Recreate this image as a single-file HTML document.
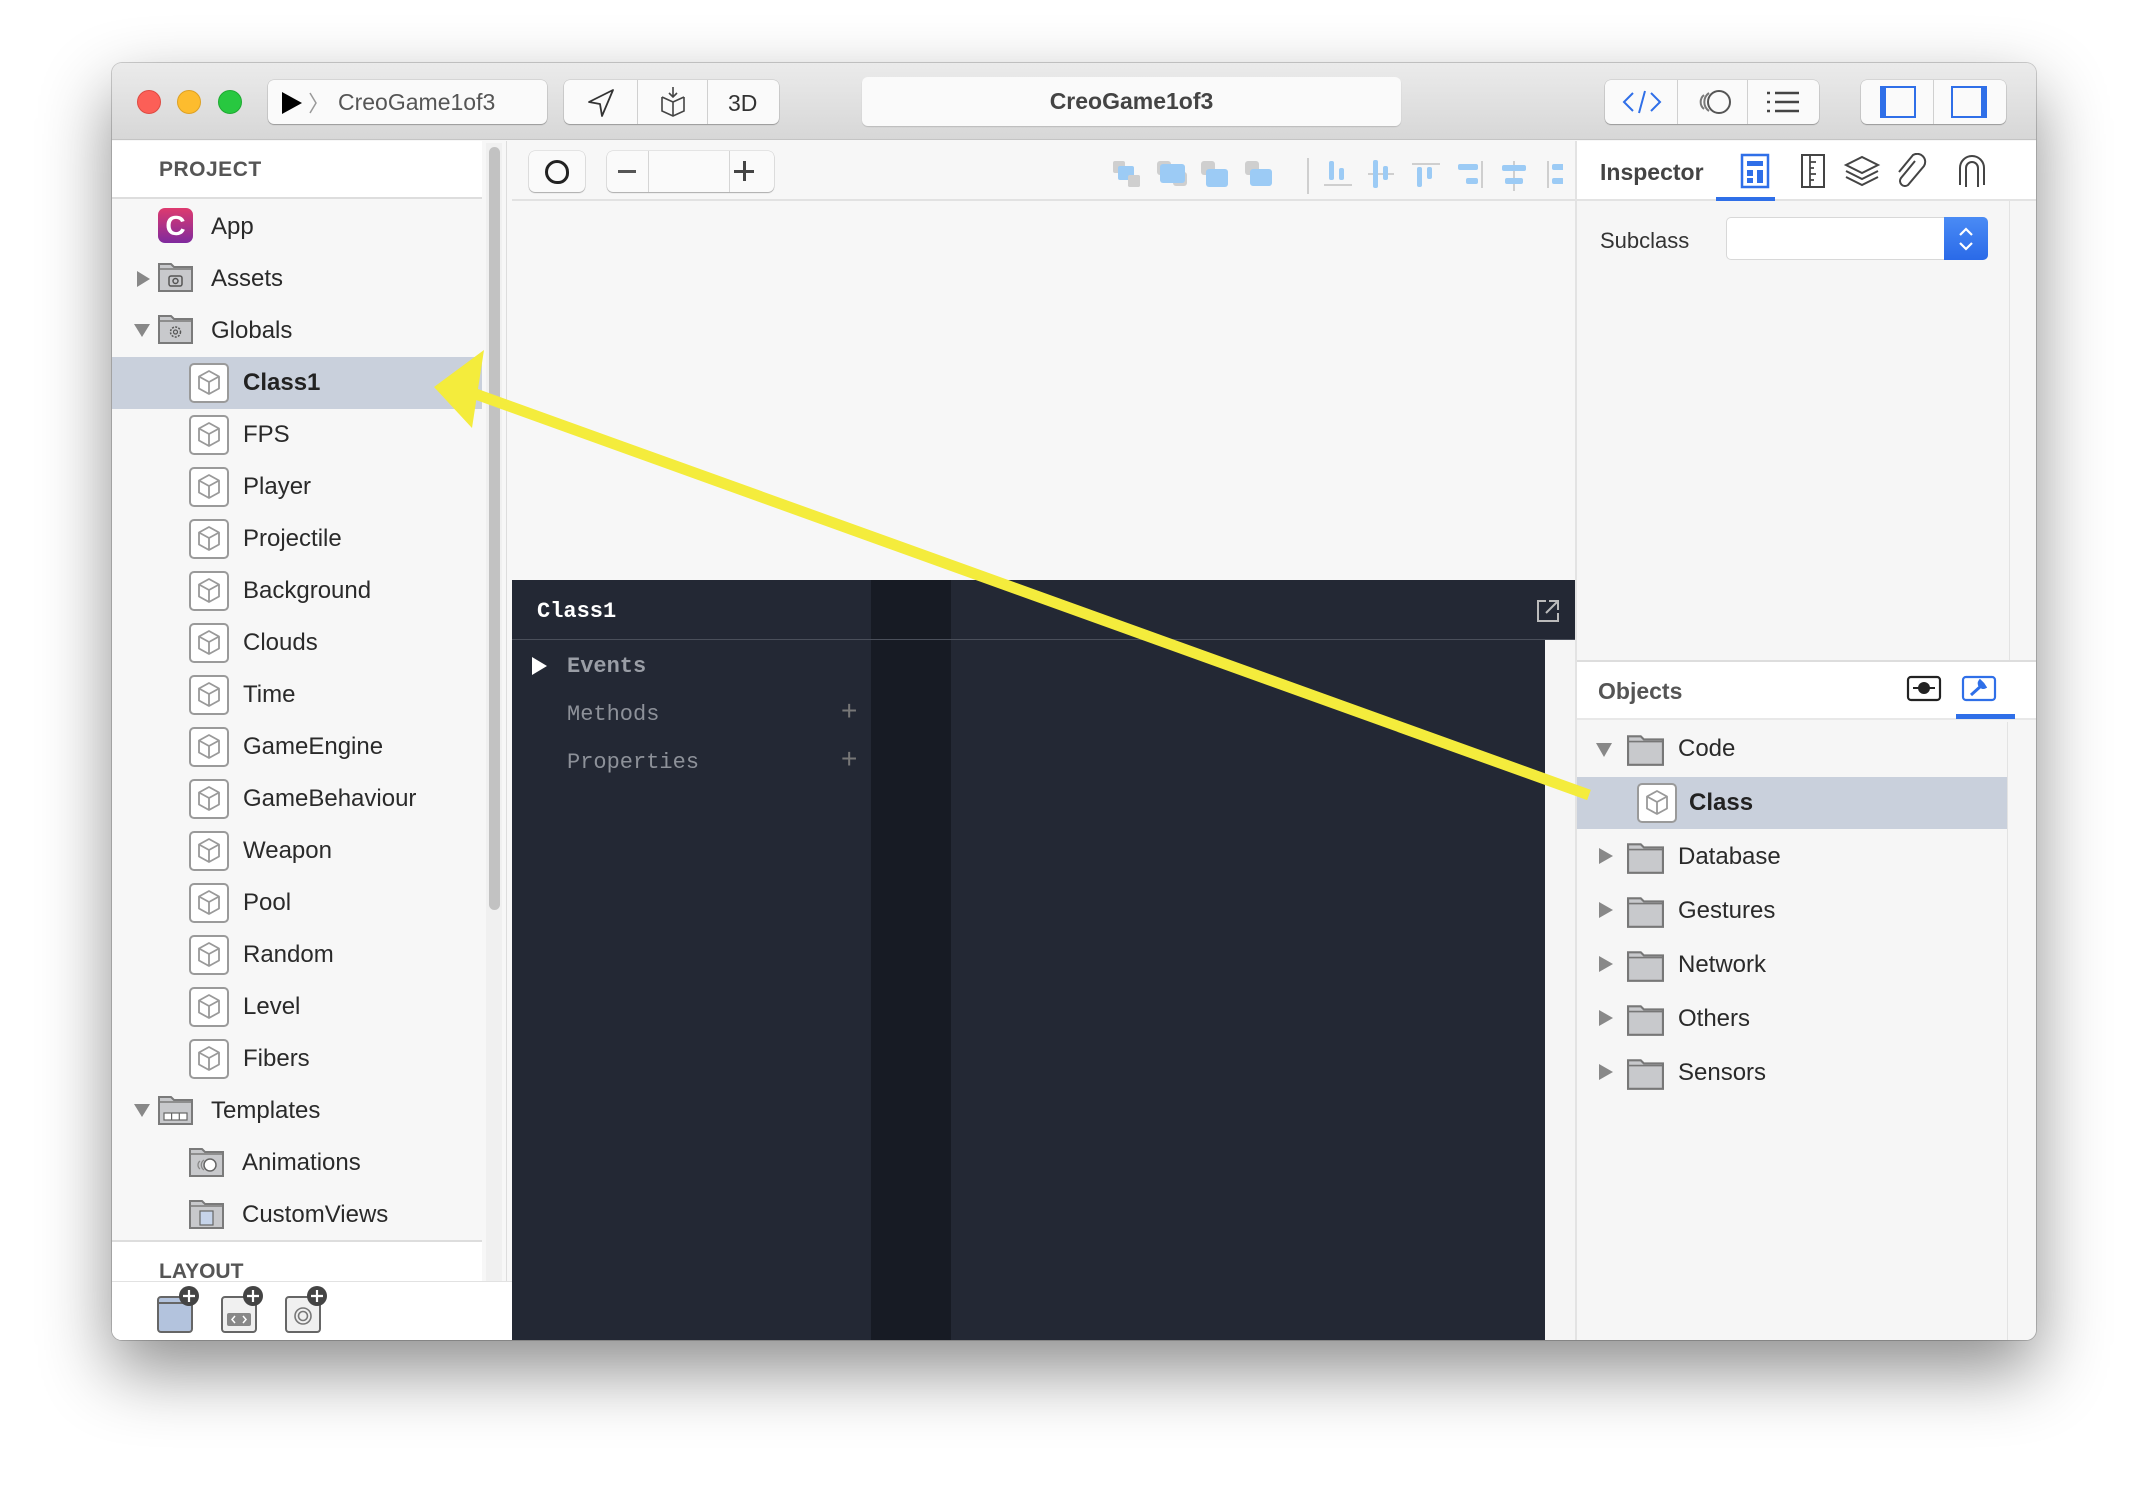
<!DOCTYPE html>
<html><head><meta charset="utf-8"><style>
*{margin:0;padding:0;box-sizing:border-box}
body{width:2148px;height:1500px;background:#fff;position:relative;overflow:hidden;font-family:"Liberation Sans",sans-serif;color:#2a2a2a}
.a{position:absolute}
.win{left:112px;top:63px;width:1924px;height:1277px;border-radius:10px;background:#f7f7f7;box-shadow:0 30px 70px rgba(0,0,0,.45),0 0 0 1px rgba(0,0,0,.18);overflow:hidden}
.tb{left:0;top:0;width:1924px;height:77px;background:linear-gradient(#ebebeb,#d7d7d7);border-bottom:1px solid #c4c4c4}
.dot{width:24px;height:24px;border-radius:50%;top:27px}
.btn{background:#fafafa;border-radius:6px;box-shadow:0 1px 1px rgba(0,0,0,.25),0 0 0 .5px rgba(0,0,0,.15)}
.row{position:absolute;height:52px;font-size:24px;line-height:52px;white-space:nowrap}
.tri{position:absolute;width:0;height:0}
.cube{position:absolute;width:40px;height:40px;border:2px solid #9a9a9a;border-radius:5px;background:#fff}
.fold{position:absolute;width:35px;height:31px}
.mono{font-family:"Liberation Mono","DejaVu Sans Mono",monospace}
</style></head><body>
<div class="a win">
 <div class="a tb">
  <div class="a dot" style="left:25px;background:#fc5f57;border:1px solid #de4a42"></div>
  <div class="a dot" style="left:65px;background:#fdbc2e;border:1px solid #dea123"></div>
  <div class="a dot" style="left:106px;background:#28c840;border:1px solid #1faa32"></div>
  <div class="a btn" style="left:156px;top:17px;width:279px;height:44px"></div>
  <svg class="a" style="left:168px;top:28px" width="40" height="24"><path d="M2 1 L22 12 L2 23Z" fill="#000"/><path d="M30 2 L36 12 L30 22" stroke="#999" stroke-width="1.5" fill="none"/></svg>
  <div class="a" style="left:226px;top:17px;line-height:44px;font-size:23px;color:#555">CreoGame1of3</div>
  <div class="a btn" style="left:452px;top:17px;width:215px;height:44px"></div>
  <div class="a" style="left:525px;top:17px;width:1px;height:44px;background:#d0d0d0"></div>
  <div class="a" style="left:595px;top:17px;width:1px;height:44px;background:#d0d0d0"></div>
  <svg class="a" style="left:474px;top:24px" width="30" height="32"><path d="M27 3 L3 15 L14 17 L16 29 Z" fill="none" stroke="#333" stroke-width="1.8" stroke-linejoin="round"/></svg>
  <svg class="a" style="left:546px;top:22px" width="30" height="34"><path d="M15 2 V12 M11 8 L15 12 L19 8" stroke="#444" stroke-width="1.6" fill="none"/><path d="M4 12 L15 17 L26 12 M4 12 V26 L15 31 L26 26 V12 M15 17 V31" stroke="#444" stroke-width="1.6" fill="none"/></svg>
  <div class="a" style="left:616px;top:17px;line-height:46px;font-size:23px;color:#333">3D</div>
  <div class="a btn" style="left:750px;top:14px;width:539px;height:49px;box-shadow:0 1px 1px rgba(0,0,0,.15)"></div>
  <div class="a" style="left:750px;top:14px;width:539px;line-height:49px;text-align:center;font-size:23px;font-weight:bold;color:#444">CreoGame1of3</div>
  <div class="a btn" style="left:1493px;top:17px;width:214px;height:44px"></div>
  <div class="a" style="left:1565px;top:17px;width:1px;height:44px;background:#d0d0d0"></div>
  <div class="a" style="left:1635px;top:17px;width:1px;height:44px;background:#d0d0d0"></div>
  <svg class="a" style="left:1510px;top:26px" width="40" height="26"><path d="M11 4 L2 13 L11 22 M29 4 L38 13 L29 22 M23 2 L17 24" stroke="#2f6fe8" stroke-width="2" fill="none"/></svg>
  <svg class="a" style="left:1583px;top:25px" width="40" height="28"><circle cx="24" cy="14" r="11" fill="#fafafa" stroke="#555" stroke-width="2"/><path d="M14 5 A11 11 0 0 0 14 23 M9 7 A9 9 0 0 0 9 21" stroke="#777" stroke-width="2" fill="none"/></svg>
  <svg class="a" style="left:1652px;top:27px" width="40" height="24"><g stroke="#444" stroke-width="2.5"><path d="M3 3h3M11 3h24M3 12h3M11 12h24M3 21h3M11 21h24"/></g></svg>
  <div class="a btn" style="left:1749px;top:17px;width:145px;height:44px"></div>
  <div class="a" style="left:1821px;top:17px;width:1px;height:44px;background:#d0d0d0"></div>
  <div class="a" style="left:1768px;top:23px;width:36px;height:32px;border:2.5px solid #2f6fe8;border-left-width:6px"></div>
  <div class="a" style="left:1839px;top:23px;width:36px;height:32px;border:2.5px solid #2f6fe8;border-right-width:6px"></div>
 </div>

 <!-- left sidebar -->
 <div class="a" style="left:0;top:78px;width:370px;height:1199px;background:#f7f7f7"></div>
 <div class="a" style="left:0;top:78px;width:370px;height:58px;background:#fff;border-bottom:2px solid #ddd"></div>
 <div class="a" style="left:47px;top:78px;line-height:58px;font-size:21px;font-weight:bold;color:#555;letter-spacing:.5px">PROJECT</div>
 <div class="a" style="left:374px;top:80px;width:16px;height:1199px;background:#f0f0f0"></div>
 <div class="a" style="left:377px;top:84px;width:11px;height:763px;border-radius:6px;background:#c2c2c2"></div>
 <div class="a" style="left:394px;top:78px;width:1px;height:1199px;background:#ddd"></div>

 <div class="a" style="left:46px;top:145px;width:35px;height:35px;border-radius:7px;background:linear-gradient(#de3a6e,#7f2a9e)"></div>
 <div class="a" style="left:46px;top:145px;width:35px;line-height:35px;text-align:center;color:#fff;font-weight:bold;font-size:28px">C</div>
 <div class="row" style="left:99px;top:138px">App</div>

 <div class="tri" style="left:25px;top:208px;border-left:13px solid #888;border-top:8px solid transparent;border-bottom:8px solid transparent"></div>
 <svg class="fold" style="left:46px;top:198px" viewBox="0 0 35 31"><path d="M1 3h12l3 3h18v24H1z" fill="#c8c9cc" stroke="#7a7a7a" stroke-width="2"/><path d="M1 8h33" stroke="#7a7a7a" stroke-width="1.5"/><rect x="11" y="15" width="13" height="10" rx="2" fill="none" stroke="#555" stroke-width="1.5"/><circle cx="17.5" cy="20" r="2.5" fill="none" stroke="#555" stroke-width="1.5"/></svg>
 <div class="row" style="left:99px;top:190px">Assets</div>

 <div class="tri" style="left:22px;top:261px;border-top:13px solid #888;border-left:8px solid transparent;border-right:8px solid transparent"></div>
 <svg class="fold" style="left:46px;top:250px" viewBox="0 0 35 31"><path d="M1 3h12l3 3h18v24H1z" fill="#c8c9cc" stroke="#7a7a7a" stroke-width="2"/><path d="M1 8h33" stroke="#7a7a7a" stroke-width="1.5"/><circle cx="17.5" cy="19" r="5" fill="none" stroke="#555" stroke-width="1.5" stroke-dasharray="2 1.3"/><circle cx="17.5" cy="19" r="2" fill="none" stroke="#555" stroke-width="1.2"/></svg>
 <div class="row" style="left:99px;top:242px">Globals</div>

 <div class="a" style="left:0;top:294px;width:370px;height:52px;background:#c9d0dc"></div>
 <div id="classes"></div>

 <div class="tri" style="left:22px;top:1041px;border-top:13px solid #888;border-left:8px solid transparent;border-right:8px solid transparent"></div>
 <svg class="fold" style="left:46px;top:1031px" viewBox="0 0 35 31"><path d="M1 3h12l3 3h18v24H1z" fill="#c8c9cc" stroke="#7a7a7a" stroke-width="2"/><path d="M1 8h33" stroke="#7a7a7a" stroke-width="1.5"/><rect x="6" y="19" width="23" height="7" fill="#fff" stroke="#666" stroke-width="1.2"/><path d="M13.6 19v7M21.3 19v7" stroke="#666" stroke-width="1.2"/></svg>
 <div class="row" style="left:99px;top:1022px">Templates</div>
 <svg class="fold" style="left:77px;top:1083px" viewBox="0 0 35 31"><path d="M1 3h12l3 3h18v24H1z" fill="#c8c9cc" stroke="#7a7a7a" stroke-width="2"/><path d="M1 8h33" stroke="#7a7a7a" stroke-width="1.5"/><circle cx="21" cy="19" r="6" fill="#fff" stroke="#666" stroke-width="1.5"/><path d="M15 14a6 6 0 0 0 0 10M11 15a5 5 0 0 0 0 8" stroke="#888" stroke-width="1.3" fill="none"/></svg>
 <div class="row" style="left:130px;top:1074px">Animations</div>
 <svg class="fold" style="left:77px;top:1135px" viewBox="0 0 35 31"><path d="M1 3h12l3 3h18v24H1z" fill="#c8c9cc" stroke="#7a7a7a" stroke-width="2"/><path d="M1 8h33" stroke="#7a7a7a" stroke-width="1.5"/><rect x="11" y="13" width="13" height="14" fill="#c6d4ea" stroke="#666" stroke-width="1.2"/></svg>
 <div class="row" style="left:130px;top:1126px">CustomViews</div>

 <div class="a" style="left:0;top:1177px;width:370px;height:101px;background:#fff;border-top:2px solid #ddd"></div>
 <div class="a" style="left:47px;top:1197px;font-size:21px;font-weight:bold;color:#555">LAYOUT</div>
 <div class="a" style="left:0;top:1218px;width:400px;height:59px;background:#fff;border-top:1px solid #e2e2e2"></div>
 <svg class="a" style="left:44px;top:1222px" width="260" height="50">
  <rect x="2" y="12" width="34" height="35" rx="3" fill="#b3c3dd" stroke="#666" stroke-width="2"/><path d="M2 18h34" stroke="#666" stroke-width="2"/>
  <circle cx="33" cy="11" r="10" fill="#444"/><path d="M33 5v12M27 11h12" stroke="#fff" stroke-width="2.2"/>
  <rect x="66" y="12" width="34" height="35" rx="3" fill="#f0f0f0" stroke="#666" stroke-width="2"/><rect x="71" y="28" width="24" height="13" rx="2" fill="#888"/><path d="M79 31l-3 3.5 3 3.5M87 31l3 3.5-3 3.5" stroke="#fff" stroke-width="1.5" fill="none"/>
  <circle cx="97" cy="11" r="10" fill="#444"/><path d="M97 5v12M91 11h12" stroke="#fff" stroke-width="2.2"/>
  <rect x="130" y="12" width="34" height="35" rx="3" fill="#f0f0f0" stroke="#666" stroke-width="2"/><circle cx="147" cy="31" r="8" fill="none" stroke="#777" stroke-width="1.6"/><circle cx="147" cy="31" r="4.5" fill="none" stroke="#777" stroke-width="1.6"/>
  <circle cx="161" cy="11" r="10" fill="#444"/><path d="M161 5v12M155 11h12" stroke="#fff" stroke-width="2.2"/>
 </svg>

 <!-- canvas -->
 <div class="a" style="left:400px;top:78px;width:1063px;height:60px;background:#f7f7f7;border-bottom:2px solid #e2e2e2"></div>
 <div class="a btn" style="left:417px;top:88px;width:56px;height:41px"></div>
 <div class="a" style="left:433px;top:97px;width:24px;height:24px;border:3px solid #222;border-radius:50% 50% 45% 50%"></div>
 <div class="a btn" style="left:495px;top:88px;width:167px;height:41px"></div>
 <div class="a" style="left:536px;top:88px;width:1px;height:41px;background:#d5d5d5"></div>
 <div class="a" style="left:617px;top:88px;width:1px;height:41px;background:#d5d5d5"></div>
 <div class="a" style="left:506px;top:107px;width:18px;height:3px;background:#555"></div>
 <div class="a" style="left:631px;top:98px;width:3px;height:20px;background:#444"></div>
 <div class="a" style="left:622px;top:107px;width:20px;height:3px;background:#444"></div>
 <svg class="a" style="left:1001px;top:95px" width="450" height="40">
  <g fill="#cfcfcf"><rect x="0" y="3" width="12" height="12" rx="2"/><rect x="15" y="17" width="12" height="12" rx="2"/></g><rect x="5" y="8" width="16" height="14" rx="2" fill="#9ccbf5"/><rect x="15" y="17" width="12" height="12" rx="2" fill="#cfcfcf"/>
  <rect x="44" y="3" width="14" height="14" rx="3" fill="#cfcfcf"/><rect x="60" y="14" width="14" height="14" rx="3" fill="#cfcfcf"/><rect x="47" y="6" width="25" height="19" rx="3" fill="#9ccbf5"/>
  <rect x="88" y="3" width="14" height="14" rx="3" fill="#cfcfcf"/><rect x="93" y="11" width="22" height="18" rx="3" fill="#9ccbf5"/>
  <rect x="132" y="3" width="14" height="14" rx="3" fill="#cfcfcf"/><rect x="137" y="11" width="22" height="17" rx="3" fill="#9ccbf5"/>
  <rect x="194" y="-4" width="2" height="40" fill="#cfcfcf"/>
  <rect x="216" y="3" width="5" height="19" rx="2" fill="#9ccbf5"/><rect x="226" y="10" width="5" height="12" rx="2" fill="#9ccbf5"/><rect x="211" y="26" width="28" height="2" fill="#cfcfcf"/>
  <rect x="255" y="15" width="26" height="2" fill="#cfcfcf"/><rect x="260" y="2" width="5" height="28" rx="2" fill="#9ccbf5"/><rect x="270" y="8" width="5" height="14" rx="2" fill="#9ccbf5"/>
  <rect x="299" y="5" width="28" height="2" fill="#cfcfcf"/><rect x="304" y="9" width="5" height="20" rx="2" fill="#9ccbf5"/><rect x="314" y="9" width="5" height="12" rx="2" fill="#9ccbf5"/>
  <rect x="368" y="3" width="2" height="27" fill="#cfcfcf"/><rect x="345" y="6" width="20" height="6" rx="2" fill="#9ccbf5"/><rect x="353" y="20" width="12" height="6" rx="2" fill="#9ccbf5"/>
  <rect x="400" y="3" width="2" height="30" fill="#cfcfcf"/><rect x="389" y="7" width="24" height="6" rx="2" fill="#9ccbf5"/><rect x="392" y="20" width="18" height="6" rx="2" fill="#9ccbf5"/>
  <rect x="434" y="3" width="2" height="27" fill="#cfcfcf"/><rect x="439" y="6" width="20" height="6" rx="2" fill="#9ccbf5"/><rect x="439" y="20" width="12" height="6" rx="2" fill="#9ccbf5"/>
 </svg>

 <!-- dark code panel -->
 <div class="a" style="left:400px;top:517px;width:1063px;height:760px;background:#232834"></div>
 <div class="a" style="left:759px;top:517px;width:80px;height:760px;background:#171b24"></div>
 <div class="a" style="left:400px;top:576px;width:1063px;height:1px;background:#4a4f5a"></div>
 <div class="a" style="left:1433px;top:577px;width:30px;height:700px;background:#f5f5f5"></div>
 <div class="a mono" style="left:425px;top:536px;font-size:22px;font-weight:bold;color:#fff">Class1</div>
 <svg class="a" style="left:1423px;top:535px" width="26" height="26"><path d="M11 3H3v20h20v-8M14 3h9v9M23 3L11 15" stroke="#bbb" stroke-width="2" fill="none"/></svg>
 <div class="a" style="left:420px;top:594px;border-left:15px solid #fff;border-top:9px solid transparent;border-bottom:9px solid transparent"></div>
 <div class="a mono" style="left:455px;top:591px;font-size:22px;font-weight:bold;color:#9a9ea6">Events</div>
 <div class="a mono" style="left:455px;top:639px;font-size:22px;color:#8d9199">Methods</div>
 <div class="a mono" style="left:455px;top:687px;font-size:22px;color:#8d9199">Properties</div>
 <div class="a" style="left:729px;top:632px;font-size:28px;color:#777">+</div>
 <div class="a" style="left:729px;top:680px;font-size:28px;color:#777">+</div>

 <!-- right panel -->
 <div class="a" style="left:1463px;top:78px;width:461px;height:1199px;background:#f6f6f6;border-left:2px solid #e3e3e3"></div>
 <div class="a" style="left:1465px;top:78px;width:459px;height:60px;background:#fff;border-bottom:2px solid #e3e3e3"></div>
 <div class="a" style="left:1488px;top:78px;line-height:62px;font-size:23px;font-weight:bold;color:#444">Inspector</div>
 <svg class="a" style="left:1618px;top:90px" width="290" height="36">
  <rect x="12" y="2" width="26" height="32" fill="none" stroke="#2f6fe8" stroke-width="2.5"/><rect x="17" y="8" width="16" height="5" fill="#2f6fe8"/><rect x="17" y="17" width="6" height="6" fill="#2f6fe8"/><rect x="27" y="17" width="6" height="13" fill="#2f6fe8"/><rect x="17" y="25" width="6" height="5" fill="#2f6fe8"/>
  <rect x="72" y="2" width="22" height="32" fill="none" stroke="#444" stroke-width="2"/><path d="M80 2v32M80 9h6M80 15h4M80 21h6M80 27h4" stroke="#444" stroke-width="1.8"/>
  <path d="M116 12l16-8 16 8-16 8z" fill="none" stroke="#444" stroke-width="2"/><path d="M116 18l16 8 16-8M116 24l16 8 16-8" fill="none" stroke="#444" stroke-width="2"/>
  <path d="M185 8l-14 17a5 5 0 0 0 7 7l16-19a8 8 0 0 0-11-11l-14 17" fill="none" stroke="#444" stroke-width="2"/>
  <path d="M236 34V15a6 6 0 0 1 12 0v19M230 32V15a12 12 0 0 1 24 0v17" fill="none" stroke="#444" stroke-width="2"/>
 </svg>
 <div class="a" style="left:1604px;top:134px;width:59px;height:4px;background:#2f6fe8"></div>
 <div class="a" style="left:1488px;top:165px;font-size:22px;color:#333">Subclass</div>
 <div class="a" style="left:1614px;top:154px;width:262px;height:43px;background:#fff;border:1px solid #d8d8d8;border-radius:5px"></div>
 <div class="a" style="left:1832px;top:154px;width:44px;height:43px;background:linear-gradient(#4a8bf5,#2a6ae8);border-radius:0 5px 5px 0"></div>
 <svg class="a" style="left:1842px;top:160px" width="24" height="32"><path d="M6 12l6-6 6 6M6 20l6 6 6-6" stroke="#fff" stroke-width="2.2" fill="none"/></svg>
 <div class="a" style="left:1897px;top:138px;width:1px;height:460px;background:#e3e3e3"></div>

 <div class="a" style="left:1465px;top:597px;width:459px;height:60px;background:#fff;border-top:2px solid #ddd;border-bottom:2px solid #e8e8e8"></div>
 <div class="a" style="left:1486px;top:597px;line-height:62px;font-size:23px;font-weight:bold;color:#555">Objects</div>
 <svg class="a" style="left:1794px;top:612px" width="100" height="28"><rect x="2" y="2" width="32" height="23" rx="3" fill="none" stroke="#222" stroke-width="2.2"/><path d="M7 13h22" stroke="#222" stroke-width="2"/><circle cx="18" cy="13" r="6" fill="#222"/><rect x="57" y="2" width="32" height="23" rx="3" fill="none" stroke="#2f6fe8" stroke-width="2.2"/><path d="M65 20l10-9M74 6a4 4 0 0 0 5 6l-2-3z" stroke="#2f6fe8" stroke-width="3" fill="#2f6fe8"/></svg>
 <div class="a" style="left:1844px;top:651px;width:59px;height:5px;background:#2f6fe8"></div>
 <div class="a" style="left:1895px;top:659px;width:1px;height:620px;background:#e3e3e3"></div>
 <div id="objs"></div>
</div>

<svg class="a" style="left:0;top:0" width="2148" height="1500">
 <line x1="1589" y1="795" x2="470" y2="392" stroke="#f4ec3c" stroke-width="11"/>
 <polygon points="434,387 484,350 472,428" fill="#f4ec3c"/>
</svg>

<script>
var cube='<svg width="36" height="36" viewBox="0 0 36 36" style="position:absolute;left:0;top:0"><path d="M18 6l10 5.5v12L18 29 8 23.5v-12z M8 11.5l10 5.5 10-5.5 M18 17v12" fill="none" stroke="#999" stroke-width="1.8" stroke-linejoin="round"/></svg>';
var names=["Class1","FPS","Player","Projectile","Background","Clouds","Time","GameEngine","GameBehaviour","Weapon","Pool","Random","Level","Fibers"];
var h="";
names.forEach(function(n,i){var y=294+52*i;
h+='<div class="cube" style="left:77px;top:'+(y+6)+'px">'+cube+'</div><div class="row" style="left:131px;top:'+y+'px;'+(i==0?'font-weight:bold;color:#222':'')+'">'+n+'</div>';});
document.getElementById("classes").outerHTML=h;
var f='<svg class="fold" viewBox="0 0 35 31" style="width:37px;height:33px;left:LPX;top:TPX"><path d="M1 3h12l3 3h18v24H1z" fill="#c8c9cc" stroke="#777" stroke-width="2"/><path d="M1 8h33" stroke="#777" stroke-width="1.5"/></svg>';
var ob=["Code","","Database","Gestures","Network","Others","Sensors"];
var tops=[660,714,768,822,876,930,984];var o="";
ob.forEach(function(n,i){var y=tops[i];
 if(i==1){o+='<div class="a" style="left:1465px;top:714px;width:430px;height:52px;background:#c9d0dc"></div><div class="cube" style="left:1525px;top:'+(y+6)+'px">'+cube+'</div><div class="row" style="left:1577px;top:'+y+'px;font-weight:bold;color:#222">Class</div>';return;}
 if(i==0)o+='<div class="tri" style="left:1484px;top:'+(y+20)+'px;border-top:14px solid #888;border-left:8px solid transparent;border-right:8px solid transparent"></div>';
 else o+='<div class="tri" style="left:1487px;top:'+(y+17)+'px;border-left:14px solid #888;border-top:8px solid transparent;border-bottom:8px solid transparent"></div>';
 o+=f.replace("LPX","1515px").replace("TPX",(y+10)+"px")+'<div class="row" style="left:1566px;top:'+y+'px">'+n+'</div>';});
document.getElementById("objs").outerHTML=o;
</script>
</body></html>
